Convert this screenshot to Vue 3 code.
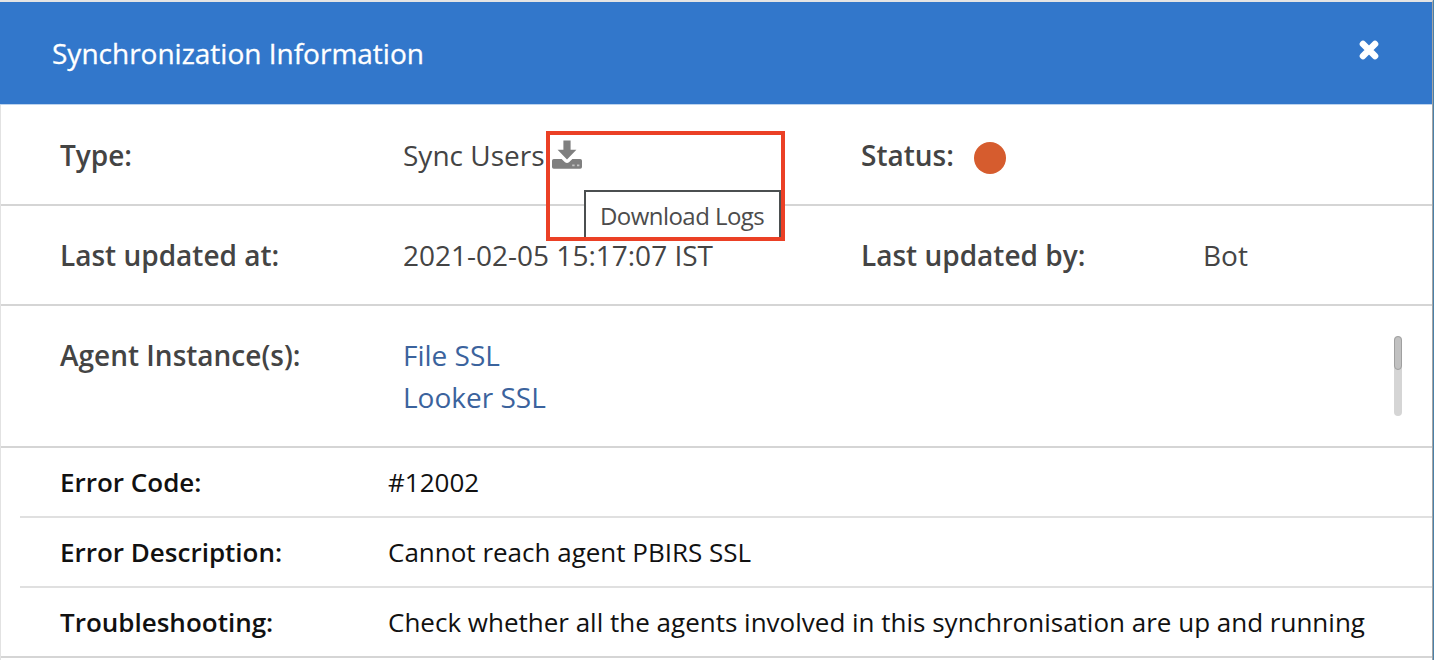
<script setup>
const agents = ['File SSL', 'Looker SSL']
const errors = [
  { label: 'Error Code:', text: '#12002', cls: 'code' },
  { label: 'Error Description:', text: 'Cannot reach agent PBIRS SSL', cls: 'desc' },
  { label: 'Troubleshooting:', text: 'Check whether all the agents involved in this synchronisation are up and running', cls: 'help' },
]
</script>

<template>
  <div class="dialog">
    <header class="head">
      <h1>Synchronization Information</h1>
      <button class="close" aria-label="Close">
        <svg viewBox="0 0 22 22" width="22" height="22"><path d="M5 5 17 17M17 5 5 17" /></svg>
      </button>
    </header>

    <section class="row first">
      <div class="label">Type:</div>
      <div class="value">
        <span class="users">Sync Users</span>
        <span class="download">
          <svg viewBox="0 0 30 29" width="30" height="29">
            <path d="M11.4 0.5H18.6V9.8H24.4L15 19.4 5.6 9.8H11.4Z" />
            <path d="M1.8 19H9.6L13 22.2Q15 23.8 17 22.2L20.4 19H28.2Q30 19 30 20.8V26.9Q30 28.7 28.2 28.7H1.8Q0 28.7 0 26.9V20.8Q0 19 1.8 19Z" />
            <path class="led" d="M20.2 24.6H22.6V26.2H20.2ZM25 24.6H27.4V26.2H25Z" />
          </svg>
          <span class="callout"><span class="tip">Download Logs</span></span>
        </span>
      </div>
      <div class="label status">Status:<i class="dot"></i></div>
    </section>

    <section class="row">
      <div class="label">Last updated at:</div>
      <div class="value">2021-02-05 15:17:07 IST</div>
      <div class="label">Last updated by:</div>
      <div class="value">Bot</div>
    </section>

    <section class="row agents">
      <div class="label">Agent Instance(s):</div>
      <ul>
        <li v-for="a in agents" :key="a">{{ a }}</li>
      </ul>
      <div class="track"><div class="thumb"></div></div>
    </section>

    <section class="errors">
      <div v-for="e in errors" :key="e.cls" class="error" :class="e.cls">
        <div class="elabel">{{ e.label }}</div>
        <div class="etext">{{ e.text }}</div>
      </div>
    </section>
  </div>
</template>

<style>
body { background: #4a80a8; overflow: hidden; }
</style>

<style scoped>
* { box-sizing: border-box; }
.dialog {
  width: 1433px; height: 660px; overflow: hidden; background: #fff;
  border-left: 1px solid #e2e2e2; border-top: 2px solid #e4e4e4; border-right: 1px solid #a5a5a5;
  font-family: "Open Sans", "Noto Sans", sans-serif; font-size: 28px; line-height: 42px; color: #444;
  white-space: nowrap;
}
.head {
  height: 102px; background: #3277cb; display: flex; justify-content: space-between; align-items: center;
  padding: 0 52px 0 52px; margin-left: -1px; color: #fff; box-shadow: 0 1px 0 #bcd3ee;
}
.dialog { border-left: 0; padding-left: 1px; box-shadow: inset 1px 0 0 #e2e2e2; }
h1 { margin: 0; font-size: 28px; font-weight: 400; line-height: 42px; -webkit-text-stroke: 0.3px #fff; }
.close { width: 22px; height: 22px; padding: 0; border: 0; background: none; margin-top: -7px; }
.close svg { display: block; }
.close path { stroke: #fff; stroke-width: 6.6; stroke-linecap: round; }
.row {
  height: 100px; display: grid; grid-template-columns: 343px 458px 342px 1fr; align-items: center;
  padding-left: 59px; border-bottom: 2px solid #d5d5d5;
}
.first { height: 102px; padding-top: 2px; }
.label { font-weight: 600; }
.value { display: flex; align-items: center; }
.users { width: 149px; }
.download { position: relative; display: block; height: 29px; margin-top: -2px; }
.download > svg { display: block; fill: #7f7f7f; }
.led { fill: #c4c4c4; }
.callout {
  position: absolute; left: -6px; top: -9px; width: 239px; height: 110px;
  border: 4px solid #eb4025; overflow: hidden; z-index: 2; pointer-events: none;
}
.tip {
  position: absolute; left: 34px; top: 55px; width: 197px; height: 60px; padding-left: 14px;
  border: 2px solid #4b4f50; background: #fff; font-size: 24px; line-height: 48px; letter-spacing: -0.55px; color: #4c4c4c;
}
.status { display: flex; align-items: center; }
.dot { width: 32px; height: 32px; border-radius: 50%; background: #d65c2e; margin: 5px 0 0 20px; }
.agents { height: 142px; grid-template-columns: 343px 1fr 44px; align-items: start; padding-top: 28px; }
ul { margin: 0; padding: 0; list-style: none; color: #3b639d; }
.track { width: 8px; height: 80px; margin: 2px 0 0 6px; border-radius: 4px; background: #d5d5d5; }
.thumb { width: 8px; height: 34px; border-radius: 4px; background: #c1c1c1; border: 1px solid #a0a0a0; }
.errors { border-bottom: 2px solid #d5d5d5; color: #111; font-size: 26px; }
.error {
  height: 70px; display: flex; align-items: center; margin-left: 19px; padding-left: 40px;
  border-bottom: 2px solid #e0e0e0;
}
.error:last-child { border-bottom: 0; height: 68px; }
.elabel { width: 328px; font-weight: 600; }
</style>
